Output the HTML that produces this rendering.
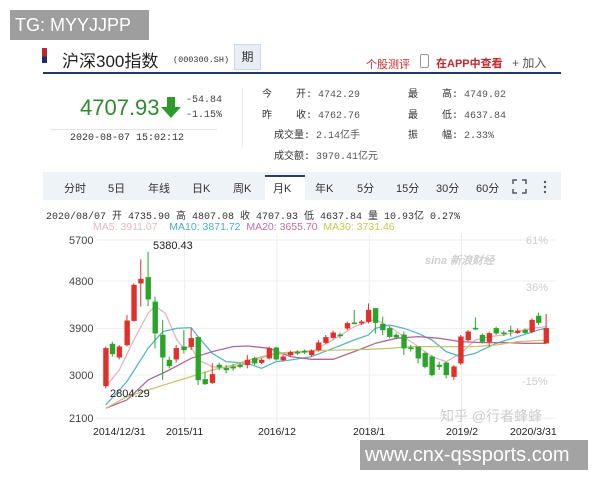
<!DOCTYPE html>
<html><head><meta charset="utf-8"><style>
*{margin:0;padding:0;box-sizing:border-box}
body{width:600px;height:480px;background:#fff;position:relative;overflow:hidden;font-family:"Liberation Sans","Noto Sans CJK SC",sans-serif;color:#333}
.a{position:absolute;white-space:nowrap}
.m{font-family:"Liberation Mono","Noto Sans CJK SC",monospace}
</style></head><body>
<div class="a" style="left:10px;top:10px;width:139px;height:30px;background:#9e9e9e;color:#fff;font-size:18px;line-height:30px;padding-left:5px">TG: MYYJJPP</div>

<div class="a" style="left:42px;top:48px;width:5px;height:15px;background:linear-gradient(#c0282d 55%,#1c2f6b 55%)"></div>
<div class="a" style="left:62px;top:47px;font-size:17px;color:#222">沪深300指数</div>
<div class="a m" style="left:173px;top:55px;font-size:8.5px;color:#333">(000300.SH)</div>
<div class="a" style="left:234px;top:44px;width:27px;height:26px;background:#e8eef4;border:1px solid #d0d8e0;font-size:12px;text-align:center;line-height:24px">期</div>
<div class="a" style="left:366px;top:56px;font-size:11px;color:#c0282d">个股测评</div>
<div class="a" style="left:420px;top:54px;width:9px;height:14px;border:1.5px solid #999;border-radius:2px"></div>
<div class="a" style="left:436px;top:55px;font-size:11px;color:#c0282d;font-weight:bold">在APP中查看</div>
<div class="a" style="left:512px;top:54px;font-size:12px;color:#555">+ 加入</div>
<div class="a" style="left:43px;top:72px;width:518px;height:2px;background:#1c3a6a"></div>

<div class="a" style="left:80px;top:95px;font-size:22px;color:#2e8b2e">4707.93</div>
<svg class="a" style="left:161px;top:97px" width="20" height="21"><path d="M6 0h8v10h6L10 21 0 10h6z" fill="#2e9a2e"/></svg>
<div class="a m" style="left:186px;top:95px;font-size:10px;color:#444">-54.84</div>
<div class="a m" style="left:186px;top:110px;font-size:10px;color:#444">-1.15%</div>
<div class="a" style="left:50px;top:129px;width:167px;height:1px;background:#e4e4e4"></div>
<div class="a m" style="left:70px;top:133px;font-size:10px;color:#333">2020-08-07 15:02:12</div>
<div class="a" style="left:242px;top:88px;width:1px;height:60px;background:#eee"></div>

<div class="a m" style="left:262px;top:86px;font-size:10px;line-height:20.5px;color:#333">
今&nbsp;&nbsp;&nbsp;&nbsp;开: <span style="color:#555">4742.29</span><br>
昨&nbsp;&nbsp;&nbsp;&nbsp;收: <span style="color:#555">4762.76</span><br>
&nbsp;&nbsp;成交量: <span style="color:#555">2.14亿手</span><br>
&nbsp;&nbsp;成交额: <span style="color:#555">3970.41亿元</span></div>
<div class="a m" style="left:408px;top:86px;font-size:10px;line-height:20.5px;color:#333">
最&nbsp;&nbsp;&nbsp;&nbsp;高: <span style="color:#555">4749.02</span><br>
最&nbsp;&nbsp;&nbsp;&nbsp;低: <span style="color:#555">4637.84</span><br>
振&nbsp;&nbsp;&nbsp;&nbsp;幅: <span style="color:#555">2.33%</span></div>

<div class="a" style="left:43px;top:172px;width:518px;height:28px;background:#eef3f8"></div>
<div class="a" style="left:265px;top:175px;width:40px;height:26px;background:#fff;border-top:2px solid #2a3f5f"></div>
<div class="a" style="top:180px;left:0;font-size:11px;color:#333">
<span class="a" style="left:64px">分时</span><span class="a" style="left:108px">5日</span><span class="a" style="left:148px">年线</span><span class="a" style="left:192px">日K</span><span class="a" style="left:233px">周K</span><span class="a" style="left:273px">月K</span><span class="a" style="left:315px">年K</span><span class="a" style="left:357px">5分</span><span class="a" style="left:396px">15分</span><span class="a" style="left:436px">30分</span><span class="a" style="left:476px">60分</span></div>
<svg class="a" style="left:512px;top:179px" width="40" height="16" fill="none" stroke="#556" stroke-width="1.5"><path d="M1 5V1h4M10 1h4v4M14 10v4h-4M5 14H1v-4"/><circle cx="33" cy="3" r="1.2" fill="#556" stroke="none"/><circle cx="33" cy="8" r="1.2" fill="#556" stroke="none"/><circle cx="33" cy="13" r="1.2" fill="#556" stroke="none"/></svg>

<div class="a m" style="left:46px;top:207px;font-size:10px;color:#333">2020/08/07 开 4735.90 高 4807.08 收 4707.93 低 4637.84 量 10.93亿 0.27%</div>
<div class="a" style="left:93px;top:221px;font-size:10.5px"><span style="color:#e8b8c0">MA5: 3911.07</span>&nbsp;&nbsp;&nbsp;&nbsp;<span style="color:#4ab0c0">MA10: 3871.72</span>&nbsp;&nbsp;<span style="color:#c070a0">MA20: 3655.70</span>&nbsp;&nbsp;<span style="color:#c8c850">MA30: 3731.46</span></div>

<svg class="a" style="left:0;top:0" width="600" height="480">
<g transform="translate(0,200) scale(0.3846,0.3333)">
<path vector-effect="non-scaling-stroke" stroke="#eee" stroke-width="1" d="M250 120H1445M250 243H1445M250 385H1445M250 525H1445M250 655H1445M480 100V690M720 100V690M960 100V690M1200 100V690"/>
<g fill="none" stroke-width="1.3">
<polyline vector-effect="non-scaling-stroke" stroke="#e6b4bc" points="275,560 310,510 348,420 385,340 403,318 430,340 460,420 478,445 497,440 515,480 552,500 588,505 643,490 700,465 755,460 810,455 866,420 921,380 976,358 1013,380 1050,410 1087,440 1123,470 1160,485 1198,460 1236,420 1272,410 1310,405 1346,395 1383,385 1420,380"/>
<polyline vector-effect="non-scaling-stroke" stroke="#5ab4c4" points="275,615 330,545 385,445 423,395 460,385 497,383 515,410 552,460 588,485 643,490 680,505 718,485 755,480 810,470 866,445 921,420 958,405 976,385 1013,375 1050,385 1087,400 1123,420 1160,455 1198,470 1236,460 1290,430 1346,410 1400,390 1420,385"/>
<polyline vector-effect="non-scaling-stroke" stroke="#b0689a" points="275,625 330,600 385,540 440,510 497,475 552,455 606,440 643,438 700,445 755,470 810,478 866,478 921,455 976,430 1030,415 1087,410 1142,415 1198,425 1254,428 1310,428 1365,430 1420,430"/>
<polyline vector-effect="non-scaling-stroke" stroke="#c8c46a" points="275,625 330,590 385,570 440,550 497,530 552,510 606,495 662,475 718,460 773,455 828,452 884,450 958,448 1013,445 1068,440 1123,440 1180,440 1236,440 1290,435 1346,425 1420,420"/>
</g>
<g stroke-width="1">
<g fill="#e0302c" stroke="#e0302c">
<path vector-effect="non-scaling-stroke" d="M275 440V565M310 435V478M330 345V440M348 250V365M366 178V320M458 435V488M497 385V450M552 490V552M643 465V505M680 475V492M700 440V478M736 465V485M755 452V470M810 448V470M828 420V455M847 405V432M866 392V418M903 365V390M940 360V375M958 310V370M1180 495V540M1198 405V495M1217 390V425M1272 395V440M1346 385V402M1383 355V400M1420 342V430"/>
<rect x="269" y="445" width="13" height="113"/><rect x="304" y="440" width="13" height="32"/><rect x="324" y="362" width="13" height="73"/><rect x="342" y="255" width="13" height="107"/><rect x="360" y="237" width="13" height="13"/><rect x="452" y="445" width="13" height="33"/><rect x="491" y="415" width="13" height="25"/><rect x="546" y="523" width="13" height="25"/><rect x="637" y="480" width="13" height="15"/><rect x="674" y="480" width="13" height="8"/><rect x="694" y="445" width="13" height="30"/><rect x="730" y="470" width="13" height="10"/><rect x="749" y="457" width="13" height="8"/><rect x="804" y="452" width="13" height="13"/><rect x="822" y="428" width="13" height="22"/><rect x="841" y="412" width="13" height="16"/><rect x="860" y="398" width="13" height="15"/><rect x="897" y="370" width="13" height="15"/><rect x="934" y="365" width="13" height="5"/><rect x="952" y="330" width="13" height="35"/><rect x="1174" y="500" width="13" height="30"/><rect x="1192" y="410" width="13" height="80"/><rect x="1211" y="395" width="13" height="25"/><rect x="1266" y="400" width="13" height="25"/><rect x="1340" y="392" width="13" height="6"/><rect x="1377" y="360" width="13" height="35"/><rect x="1414" y="385" width="13" height="45"/>
</g>
<g fill="#2aa52a" stroke="#2aa52a">
<path vector-effect="non-scaling-stroke" d="M292 425V470M385 155V318M403 290V445M423 360V540M440 470V505M478 390V460M515 410V555M533 515V555M570 488V510M588 495V520M606 492V512M624 488V505M662 470V495M718 440V482M773 450V465M792 448V462M884 398V415M921 330V372M976 325V400M995 350V405M1013 380V415M1030 398V418M1050 395V465M1068 435V455M1087 440V490M1105 455V505M1123 465V530M1142 485V510M1160 485V535M1236 352V390M1254 400V430M1290 380V405M1310 392V408M1328 377V410M1365 385V402M1400 338V375"/>
<rect x="286" y="432" width="13" height="30"/><rect x="379" y="232" width="13" height="66"/><rect x="397" y="305" width="13" height="95"/><rect x="417" y="405" width="13" height="67"/><rect x="434" y="480" width="13" height="18"/><rect x="472" y="440" width="13" height="10"/><rect x="509" y="412" width="13" height="128"/><rect x="527" y="538" width="13" height="14"/><rect x="564" y="495" width="13" height="7"/><rect x="582" y="505" width="13" height="5"/><rect x="600" y="500" width="13" height="5"/><rect x="618" y="495" width="13" height="5"/><rect x="656" y="475" width="13" height="15"/><rect x="712" y="443" width="13" height="35"/><rect x="767" y="456" width="13" height="4"/><rect x="786" y="453" width="13" height="4"/><rect x="878" y="404" width="13" height="4"/><rect x="915" y="368" width="13" height="4"/><rect x="970" y="325" width="13" height="43"/><rect x="989" y="372" width="13" height="18"/><rect x="1007" y="385" width="13" height="25"/><rect x="1024" y="405" width="13" height="7"/><rect x="1044" y="404" width="13" height="41"/><rect x="1062" y="443" width="13" height="4"/><rect x="1081" y="440" width="13" height="35"/><rect x="1099" y="460" width="13" height="40"/><rect x="1117" y="470" width="13" height="55"/><rect x="1136" y="495" width="13" height="5"/><rect x="1154" y="488" width="13" height="37"/><rect x="1230" y="384" width="13" height="4"/><rect x="1248" y="405" width="13" height="20"/><rect x="1284" y="385" width="13" height="15"/><rect x="1304" y="398" width="13" height="4"/><rect x="1322" y="391" width="13" height="4"/><rect x="1359" y="390" width="13" height="8"/><rect x="1394" y="348" width="13" height="20"/>
</g>
</g>
</g>
<g font-family="Liberation Sans,sans-serif" font-size="11" fill="#444">
<text x="69" y="244">5700</text><text x="69" y="285">4800</text><text x="69" y="332">3900</text><text x="69" y="379">3000</text><text x="69" y="422">2100</text>
<text x="153" y="249" fill="#222">5380.43</text><text x="110" y="397" fill="#222">2804.29</text>
<text x="93" y="435" font-size="10.5" fill="#222">2014/12/31</text><text x="166" y="435" font-size="10.5" fill="#222">2015/11</text><text x="258" y="435" font-size="10.5" fill="#222">2016/12</text><text x="353" y="435" font-size="10.5" fill="#222">2018/1</text><text x="446" y="435" font-size="10.5" fill="#222">2019/2</text><text x="510" y="435" font-size="10.5" fill="#222">2020/3/31</text>
<text x="526" y="244" fill="#ccc">61%</text><text x="526" y="291" fill="#ccc">36%</text><text x="522" y="385" fill="#ccc">-15%</text>
<text x="425" y="264" fill="#d0d0d0" font-style="italic" font-weight="bold">sina 新浪财经</text>
<text x="440" y="421" fill="#ccc" font-size="14" font-family="Liberation Sans,Noto Sans CJK SC,sans-serif">知乎 @行者蜂蜂</text>
</g>
</svg>
<div class="a" style="left:360px;top:440px;width:228px;height:30px;background:#a3a3a3;color:#fff;font-size:20px;line-height:30px;padding-left:5px">www.cnx-qssports.com</div>
</body></html>
